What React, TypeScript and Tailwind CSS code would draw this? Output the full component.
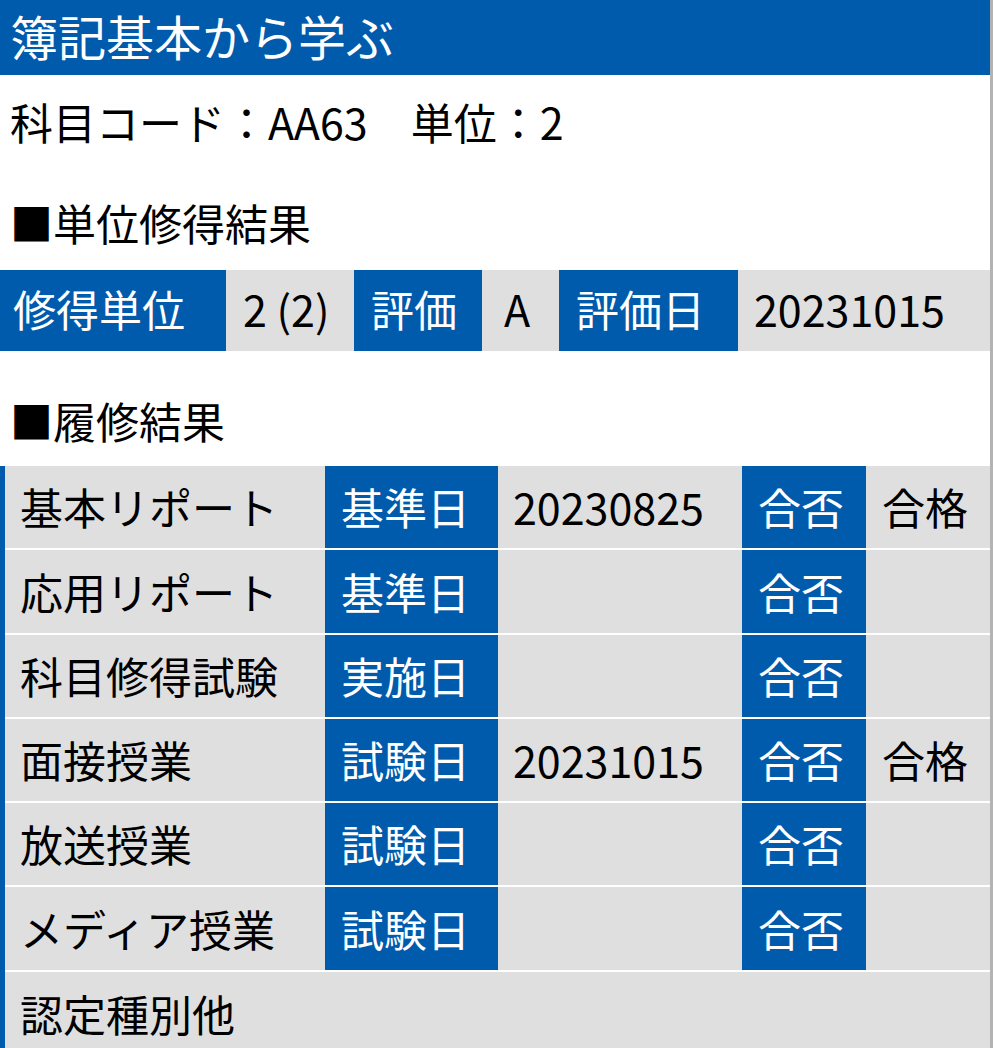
const rows = [
  { name: '基本リポート', dateLabel: '基準日', date: '20230825', result: '合格' },
  { name: '応用リポート', dateLabel: '基準日', date: '', result: '' },
  { name: '科目修得試験', dateLabel: '実施日', date: '', result: '' },
  { name: '面接授業', dateLabel: '試験日', date: '20231015', result: '合格' },
  { name: '放送授業', dateLabel: '試験日', date: '', result: '' },
  { name: 'メディア授業', dateLabel: '試験日', date: '', result: '' },
];

export default function App() {
  return (
    <div
      className="w-[993px] min-h-[1048px] bg-white border-r-[3px] border-[#b3b3b3] text-black text-[43px] leading-[1.3] overflow-hidden"
      style={{ fontFamily: '"Noto Sans CJK JP", "Noto Sans", sans-serif' }}
    >
      <div className="h-[75px] flex items-center px-[10px] pb-[5px] bg-[#005bac] text-white text-[48px] leading-none">
        簿記基本から学ぶ
      </div>

      <div className="h-[100px] flex items-center px-[10px] pb-[6px]">科目コード：AA63　単位：2</div>

      <div className="h-[95px] flex items-center px-[10px]">■単位修得結果</div>

      {/* 単位修得結果 */}
      <div className="h-[81px] flex">
        <div className="w-[226px] flex items-center pl-[13px] pb-[4px] bg-[#005bac] text-white">修得単位</div>
        <div className="w-[128px] flex items-center pl-[17px] pb-[4px] bg-[#dfdfdf]">2 (2)</div>
        <div className="w-[128px] flex items-center pl-[17px] pb-[4px] bg-[#005bac] text-white">評価</div>
        <div className="w-[77px] flex items-center pl-[22px] pb-[4px] bg-[#dfdfdf]">A</div>
        <div className="w-[179px] flex items-center pl-[17px] pb-[4px] bg-[#005bac] text-white">評価日</div>
        <div className="flex-1 flex items-center pl-[16px] pb-[4px] bg-[#dfdfdf]">20231015</div>
      </div>

      <div className="h-[115px] pt-[24px] flex items-center px-[10px]">■履修結果</div>

      {/* 履修結果 */}
      <div className="border-l-[5px] border-[#005bac] flex flex-col">
        {rows.map((r) => (
          <div key={r.name} className="h-[84.3px] flex border-b-2 border-white">
            <div className="w-[320px] flex items-center pl-[15px] bg-[#dfdfdf]">{r.name}</div>
            <div className="w-[173px] flex items-center pl-[16px] bg-[#005bac] text-white">{r.dateLabel}</div>
            <div className="w-[244px] flex items-center pl-[15px] bg-[#dfdfdf]">{r.date}</div>
            <div className="w-[124px] flex items-center pl-[16px] bg-[#005bac] text-white">合否</div>
            <div className="flex-1 flex items-center pl-[16px] bg-[#dfdfdf]">{r.result}</div>
          </div>
        ))}
        <div className="h-[84.3px] flex items-center pl-[15px] bg-[#dfdfdf]">認定種別他</div>
      </div>
    </div>
  );
}
